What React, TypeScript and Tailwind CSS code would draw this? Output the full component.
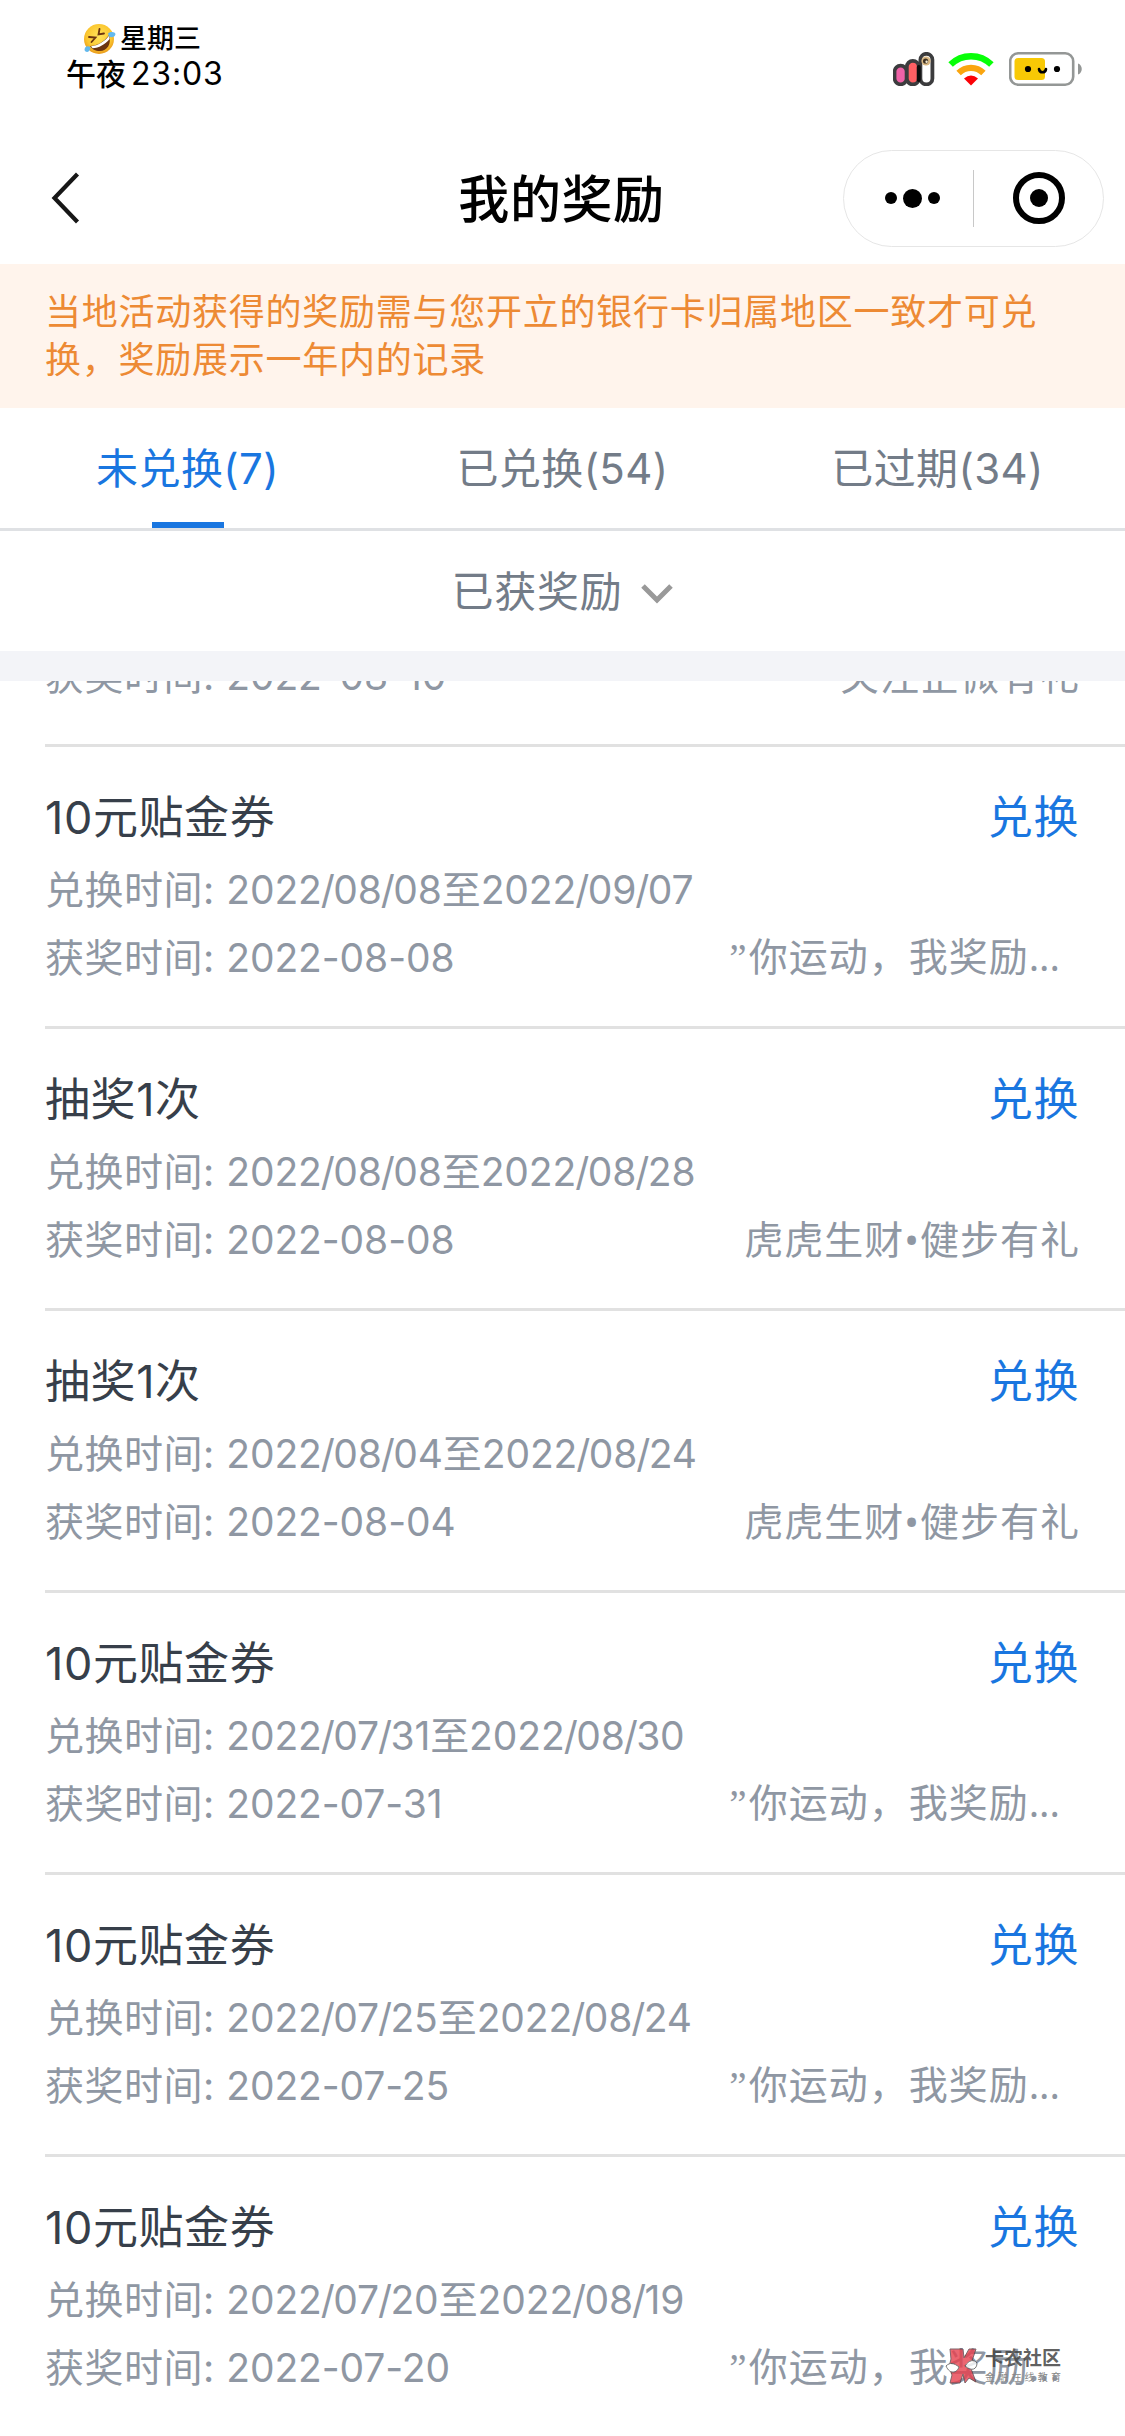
import { Fragment } from 'react';
import clsx from 'clsx';

interface Reward {
  title: string;
  period: string;
  wonAt: string;
  source: string;
}

const tabs = [
  { label: '未兑换(7)', active: true },
  { label: '已兑换(54)', active: false },
  { label: '已过期(34)', active: false },
];

const rewards: Reward[] = [
  { title: '10元贴金券', period: '2022/08/08至2022/09/07', wonAt: '2022-08-08', source: '”你运动，我奖励...' },
  { title: '抽奖1次', period: '2022/08/08至2022/08/28', wonAt: '2022-08-08', source: '虎虎生财•健步有礼' },
  { title: '抽奖1次', period: '2022/08/04至2022/08/24', wonAt: '2022-08-04', source: '虎虎生财•健步有礼' },
  { title: '10元贴金券', period: '2022/07/31至2022/08/30', wonAt: '2022-07-31', source: '”你运动，我奖励...' },
  { title: '10元贴金券', period: '2022/07/25至2022/08/24', wonAt: '2022-07-25', source: '”你运动，我奖励...' },
  { title: '10元贴金券', period: '2022/07/20至2022/08/19', wonAt: '2022-07-20', source: '”你运动，我奖励...' },
];

function LaughingFace() {
  return (
    <svg width="33" height="32" viewBox="0 0 33 32">
      <defs>
        <radialGradient id="face" cx="0.5" cy="0.4" r="0.6">
          <stop offset="0" stopColor="#ffe45c" />
          <stop offset="0.7" stopColor="#fbc62f" />
          <stop offset="1" stopColor="#e99a1c" />
        </radialGradient>
      </defs>
      <circle cx="16" cy="16" r="15" fill="url(#face)" />
      <path d="M7 23 C14 23 21 19 26 12 C29 21 24 28 17 28 C12 28 9 26 7 23Z" fill="#6b3410" />
      <path d="M8 23.3 C15 22.5 21 19 26 12.8 L26.6 16 C22 21.5 16 25 9.6 25.2Z" fill="#fff" />
      <path d="M6 14 L12.5 14.5 L8.5 19" fill="none" stroke="#6b3410" strokeWidth="1.8" strokeLinecap="round" />
      <path d="M16.5 6 L15.5 11.5 L21 10.5" fill="none" stroke="#6b3410" strokeWidth="1.8" strokeLinecap="round" />
      <path d="M25 10.5 C28 8 32 9 32.5 11 C32 14.5 28 15 26 13.5Z" fill="#63b9ee" />
      <path d="M7.5 24 C4 22 1.5 24 1.5 27 C2.5 30 7 30 7.5 24Z" fill="#63b9ee" />
    </svg>
  );
}

function SignalIcon() {
  return (
    <svg width="42" height="34" viewBox="0 0 42 34">
      <rect x="1.6" y="13.6" width="12" height="18.8" rx="6" fill="#f062a8" stroke="#3c3c3e" strokeWidth="3.6" />
      <rect x="27.4" y="1.8" width="12" height="30.6" rx="6" fill="#fff" stroke="#3c3c3e" strokeWidth="3.8" />
      <rect x="13.8" y="8.8" width="12" height="23.6" rx="6" fill="#ff5f63" stroke="#3c3c3e" strokeWidth="3.8" />
      <path d="M25.8 15 V28" stroke="#0d0d0d" strokeWidth="4" strokeLinecap="round" />
      <circle cx="33" cy="9" r="4.6" fill="#d9b782" />
      <circle cx="32.6" cy="9" r="2.6" fill="#3c3022" />
      <circle cx="33.6" cy="9.8" r="1.2" fill="#f5ead2" />
    </svg>
  );
}

function WifiIcon() {
  return (
    <svg width="46" height="34" viewBox="0 0 46 34">
      <path d="M2.6 12.6 A29 29 0 0 1 43.4 12.6" fill="none" stroke="#08ff08" strokeWidth="6.4" />
      <path d="M10.6 21 A17.5 17.5 0 0 1 35.4 21" fill="none" stroke="#faa50f" strokeWidth="6.2" />
      <path d="M16 26.5 Q23 20.5 30 26.5 L23 33.5Z" fill="#fb0207" />
    </svg>
  );
}

function BatteryIcon() {
  return (
    <svg width="73" height="34" viewBox="0 0 73 34">
      <rect x="1.2" y="1.3" width="63" height="31.4" rx="8" fill="#fff" stroke="#949796" strokeWidth="2.6" />
      <rect x="5.5" y="6" width="30.5" height="22" rx="3.5" fill="#f8c905" />
      <circle cx="19" cy="17" r="3.1" fill="#000" />
      <circle cx="48" cy="17" r="3.1" fill="#000" />
      <path d="M30 17 C30.5 21.4 36.5 21.4 37 17" fill="none" stroke="#000" strokeWidth="2.6" strokeLinecap="round" />
      <path d="M69 11.5 C74 13 74 21 69 22.5Z" fill="#949796" />
    </svg>
  );
}

function StatusBar() {
  return (
    <div className="flex h-[132px] justify-between text-black">
      <div className="ml-[66px] pt-[22px] font-medium">
        <div className="flex h-[34px] items-center gap-1 pl-[17px]">
          <LaughingFace />
          <span className="text-[27px] leading-[34px]">星期三</span>
        </div>
        <div className="flex h-[36px] items-center gap-[5px]">
          <span className="text-[30px] leading-[36px]">午夜</span>
          <span className="text-[32px] leading-[36px] font-normal tracking-[0.8px]">23:03</span>
        </div>
      </div>
      <div className="mt-[52px] mr-[43px] flex h-[34px] items-center">
        <SignalIcon />
        <div className="ml-[13px]">
          <WifiIcon />
        </div>
        <div className="ml-[15px]">
          <BatteryIcon />
        </div>
      </div>
    </div>
  );
}

function NavBar() {
  return (
    <div className="grid h-[132px] grid-cols-[1fr_auto_1fr] items-center">
      <button className="ml-[50px] w-fit">
        <svg width="30" height="52" viewBox="0 0 30 52">
          <path d="M27.5 2 L4.5 26 L27.5 50" fill="none" stroke="#171717" strokeWidth="4.2" />
        </svg>
      </button>
      <h1 className="pt-[3px] pr-[2px] text-[51px] leading-[72px] font-medium tracking-[0.6px] text-black">我的奖励</h1>
      <div className="mr-[21px] ml-auto flex h-[97px] w-[261px] items-center rounded-full border border-[#e6e6e6]">
        <div className="flex w-[129px] items-center justify-center gap-[6px] pl-[7px]">
          <span className="size-[12px] rounded-full bg-black" />
          <span className="size-[19px] rounded-full bg-black" />
          <span className="size-[12px] rounded-full bg-black" />
        </div>
        <div className="h-[57px] w-px bg-[#c8c8c8]" />
        <div className="flex flex-1 justify-center">
          <div className="flex size-[52px] items-center justify-center rounded-full border-[6px] border-black">
            <span className="size-[18px] rounded-full bg-black" />
          </div>
        </div>
      </div>
    </div>
  );
}

// slashes sit tighter against the digits than Inter sets them
function Period({ value }: { value: string }) {
  return (
    <span className="tracking-[-0.1px]">
      {value.split('/').map((part, i) => (
        <Fragment key={i}>
          {i > 0 && <span className="-ml-[1px] tracking-[-1.6px]">/</span>}
          {part}
        </Fragment>
      ))}
    </span>
  );
}

function Source({ text }: { text: string }) {
  if (!text.endsWith('...')) {
    return <>{text}</>;
  }
  return (
    <>
      <span className="font-['Liberation_Serif',serif] tracking-[2px]">{text.slice(0, 1)}</span>
      {text.slice(1, -3)}
      <span className="tracking-normal">...</span>
    </>
  );
}

function WonLine({ wonAt, source }: Pick<Reward, 'wonAt' | 'source'>) {
  return (
    <div className="flex h-[69px] shrink-0 items-center justify-between pr-[45px] text-[39px] text-[#8f97a3]">
      <span className="tracking-[-0.1px]">
        <span className="tracking-[0.5px]">获奖时间: </span>
        {wonAt}
      </span>
      <span
        className={clsx(
          "pb-[4px] font-['Noto_Sans','Noto_Sans_CJK_SC',sans-serif] leading-[56px] tracking-[1px]",
          source.endsWith('...') && 'pr-[20px]'
        )}
      >
        <Source text={source} />
      </span>
    </div>
  );
}

function RewardItem({ reward }: { reward: Reward }) {
  return (
    <li className="ml-[45px] h-[282px] border-b-[3px] border-[#e1e1e1] pt-[36px]">
      <div className="flex h-[72px] items-center justify-between pr-[46px] pb-[2px] text-[45px] tracking-[0.6px]">
        <h2 className="text-[#373f4a]">{reward.title}</h2>
        <button className="text-[#1976e0]">兑换</button>
      </div>
      <div className="flex h-[69px] items-center pt-px text-[39px] whitespace-pre text-[#8f97a3]">
        <span className="tracking-[0.5px]">兑换时间: </span>
        <Period value={reward.period} />
      </div>
      <WonLine wonAt={reward.wonAt} source={reward.source} />
    </li>
  );
}

function Watermark() {
  return (
    <div className="absolute top-[2347px] left-[945px] flex items-start gap-[6px]">
      <svg width="34" height="38" viewBox="0 0 34 38" className="opacity-80">
        <path d="M5 2 H18 L19 11 L24 2 H31 L27 14 L25 19 L31 35 L24 31 L20 36 L18 27 L15 36 H5 L7 28 L4 20 L6 12Z" fill="#e8404e" stroke="#5c4046" strokeWidth="1" />
        <path d="M1 19 C5 15 9 16 14 20 C12 26 5 28 1 19Z" fill="#fff" stroke="#555" strokeWidth="1" />
        <path d="M20 19 C24 13 29 12 32 16 C32 22 27 25 20 19Z" fill="#fff" stroke="#555" strokeWidth="1" />
      </svg>
      <div className="flex flex-col">
        <span className="text-[19px] leading-[23px] font-bold text-[#444]/85">卡农社区</span>
        <span className="text-[10px] leading-[14px] tracking-[3.2px] text-[#888]">金融在线教育</span>
      </div>
    </div>
  );
}

export default function App() {
  return (
    <div className="relative h-[2436px] w-[1125px] overflow-hidden bg-white font-[Inter,'Noto_Sans_CJK_SC',sans-serif] whitespace-nowrap">
      <StatusBar />
      <NavBar />

      <div className="h-[144px] bg-[#fff4ec] pt-[24px] pl-[45px] text-[36px] leading-[48px] tracking-[0.75px] text-[#ed8a34]">
        <p>当地活动获得的奖励需与您开立的银行卡归属地区一致才可兑</p>
        <p>换，奖励展示一年内的记录</p>
      </div>

      <div className="grid h-[123px] grid-cols-3 border-b-[3px] border-[#dfe1e4]">
        {tabs.map((tab) => (
          <button
            key={tab.label}
            className={clsx(
              'flex flex-col items-center text-[42px] tracking-[0.4px]',
              tab.active ? 'text-[#1976e0]' : 'text-[#737c88]'
            )}
          >
            <span className="h-[114px] pt-[4px] leading-[114px]">{tab.label}</span>
            {tab.active && <span className="h-[6px] w-[72px] bg-[#1976e0]" />}
          </button>
        ))}
      </div>

      <div className="flex h-[120px] items-center justify-center gap-[19px] text-[42px] tracking-[0.7px] text-[#737c88]">
        已获奖励
        <svg width="32" height="22" viewBox="0 0 32 22" className="mt-[3px]">
          <path d="M2 4 L16 18 L30 4" fill="none" stroke="#999" strokeWidth="5" />
        </svg>
      </div>

      <div className="h-[30px] bg-[#f3f4f8]" />

      <div className="ml-[45px] flex h-[66px] flex-col justify-end overflow-hidden border-b-[3px] border-[#e1e1e1] pb-[33px]">
        <WonLine wonAt="2022-08-10" source="关注企微有礼" />
      </div>

      <ul>
        {rewards.map((reward) => (
          <RewardItem key={reward.period} reward={reward} />
        ))}
      </ul>

      <Watermark />
    </div>
  );
}
